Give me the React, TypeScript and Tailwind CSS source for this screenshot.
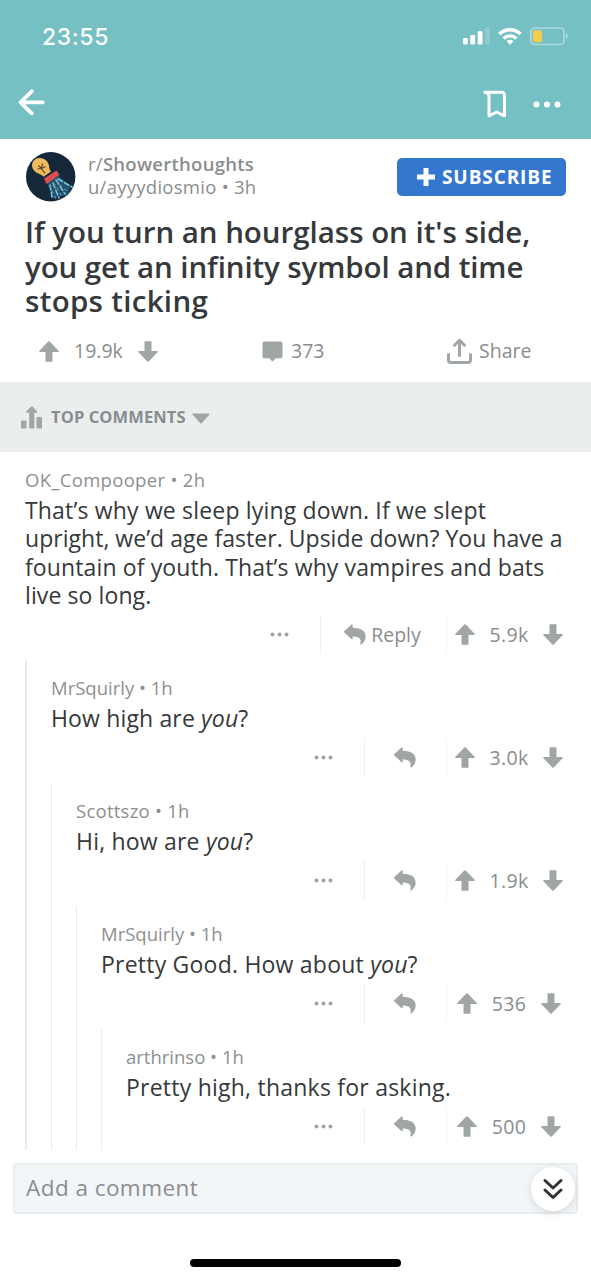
import React from 'react';

type IVotesProps = {
  count: string;
  className?: string;
};

type ICommentProps = {
  author: string;
  age: string;
  authorClass?: string;
  score: string;
  children: React.ReactNode;
  reply?: React.ReactNode;
};

const UpArrow = () => (
  <svg width="20" height="21" viewBox="0 0 20 21" fill="#a0a5a5">
    <path d="M9.3.5a1 1 0 0 1 1.4 0l8.9 9.3c.5.6.3 1.1-.5 1.1h-5.6v9.3c0 .4-.2.6-.6.6H7.1c-.4 0-.6-.2-.6-.6v-9.3H.9c-.8 0-1-.5-.5-1.1z" />
  </svg>
);

const DownArrow = () => (
  <svg width="20" height="21" viewBox="0 0 20 21" fill="#a0a5a5">
    <path d="M9.3 20.5a1 1 0 0 0 1.4 0l8.9-9.3c.5-.6.3-1.1-.5-1.1h-5.6V.8c0-.4-.2-.6-.6-.6H7.1c-.4 0-.6.2-.6.6v9.3H.9c-.8 0-1 .5-.5 1.1z" />
  </svg>
);

const ReplyArrow = () => (
  <svg width="22" height="21" viewBox="0 0 22 21" fill="#a0a5a5">
    <path d="M.4 7 7.3.7C8 .1 8.7.3 8.7 1.2v2.500c7 .1 13 2.600 13 8.800 0 3.600-2 6.300-4.500 7.900-.7.400-1.300.1-1-.7 1.600-4.300-.6-7.200-7.500-7.300v2.200c0 .9-.7 1.100-1.400.5L.4 8.600a1.100 1.100 0 0 1 0-1.600z" />
  </svg>
);

const Dots = () => (
  <svg width="19" height="5" viewBox="0 0 19 5" fill="#a0a5a5">
    <circle cx="2.500" cy="2.500" r="2" />
    <circle cx="9.500" cy="2.500" r="2" />
    <circle cx="16.500" cy="2.500" r="2" />
  </svg>
);

const Avatar = () => (
  <svg width="50" height="50" viewBox="0 0 50 50" className="shrink-0">
    <circle cx="24.700" cy="24.700" r="24.700" fill="#15283a" />
    <path d="M21 31 32 23.500 45 34l-3 9-15 3z" fill="#24506d" />
    <path
      d="M24 33l2 12M27 31l6 15M30 28l9 14M32 27l14 8"
      stroke="#7ac3d0"
      strokeWidth="1.600"
      strokeDasharray="5 2.500"
      strokeLinecap="round"
    />
    <path
      d="M24 35l6 12M29 32l7 13M31 30l11 10"
      stroke="#4a8bad"
      strokeWidth="1.500"
      strokeDasharray="3 3"
      strokeDashoffset="2"
    />
    <path
      d="M8 18.500C4 13.500 6.500 7 12.500 6c6-.7 10 3.500 10.500 8 .2 2.500.8 4 2 5.500l-7.500 5.300c-2-2.800-7-3.200-9.500-6.300z"
      fill="#efbb5d"
    />
    <path d="M12.500 13.500l3 3 1-5M15.500 16.500l3.500 5M11.500 17l4-.5 4-2" stroke="#5b4330" fill="none" strokeWidth="1.200" />
    <path d="M18 26.500 30.500 18.500l3 4.300L20.500 32z" fill="#d94f50" />
  </svg>
);

const SignalIcon = () => (
  <svg width="28" height="18" viewBox="0 0 28 18" fill="#fff">
    <rect x="0" y="11" width="4.800" height="6.500" rx="1.200" />
    <rect x="7.300" y="8" width="4.800" height="9.500" rx="1.200" />
    <rect x="14.700" y="4" width="4.800" height="13.500" rx="1.200" />
    <rect x="22" y=".5" width="4.800" height="17" rx="1.200" opacity=".2" />
  </svg>
);

const WifiIcon = () => (
  <svg width="24" height="18" viewBox="0 0 24 18" fill="none" stroke="#fff" strokeWidth="3.600">
    <path d="M1.500 7a15 15 0 0 1 21 0" />
    <path d="M5.600 11.500a9.200 9.200 0 0 1 12.800 0" strokeWidth="3.300" />
    <path d="M8.500 14.300a5 5 0 0 1 7 0L12 17.800z" fill="#fff" stroke="none" />
  </svg>
);

const BatteryIcon = () => (
  <svg width="39" height="19" viewBox="0 0 39 19" fill="none">
    <rect x="1" y="1" width="33" height="16.500" rx="4" stroke="#fff" strokeOpacity=".4" strokeWidth="1.700" />
    <rect x="3" y="3.300" width="9" height="12" rx="2" fill="#f2cc4b" />
    <path d="M36 6.300c2.300.8 2.300 5.200 0 6z" fill="#fff" opacity=".5" />
  </svg>
);

const Votes = ({ count, className = '' }: IVotesProps) => (
  <div className={`flex items-center gap-[15px] font-medium text-[#8a8d8e] ${className}`}>
    <UpArrow />
    <span>{count}</span>
    <DownArrow />
  </div>
);

const Comment = ({ author, age, authorClass = '', score, children, reply }: ICommentProps) => (
  <div className="pt-4 pb-[5.7px]">
    <p className={`text-[18.5px] leading-[23px] text-[#8d9091] ${authorClass}`}>
      {author} • {age}
    </p>
    <div className="mt-[5px] text-[23px] leading-[28.3px] whitespace-nowrap text-[#36393b]">
      {children}
    </div>
    <div className="mt-[6px] flex h-[39px] justify-end">
      <div className="flex w-[82px] items-center justify-center">
        <Dots />
      </div>
      <div
        className={`flex items-center justify-center border-l border-[#edf0f0] pr-[2px] ${
          reply ? 'w-[126px]' : 'w-[82px]'
        }`}
      >
        <ReplyArrow />
        {reply}
      </div>
      <Votes
        count={score}
        className="w-[145px] justify-center border-l border-[#f3f5f5] pr-[20px] text-[19.5px] tracking-[0.3px]"
      />
    </div>
  </div>
);

const Thread = ({ children, className = 'border-l' }: { children: React.ReactNode; className?: string }) => (
  <div className={`border-[#e9ecec] pl-[24px] ${className}`}>{children}</div>
);

const App = () => (
  <div className="flex h-[1280px] w-[591px] flex-col overflow-hidden bg-white font-['Open_Sans',sans-serif]">
    <header className="h-[139px] shrink-0 bg-[#75c0c3] text-white">
      <div className="flex h-[72px] items-center justify-between pr-[22px] pl-[42px]">
        <span className="pt-[2px] font-['Inter',sans-serif] text-[23px] font-medium tracking-[0.6px]">23:55</span>
        <div className="flex items-center">
          <SignalIcon />
          <div className="ml-[7px]">
            <WifiIcon />
          </div>
          <div className="ml-[8px]">
            <BatteryIcon />
          </div>
        </div>
      </div>
      <div className="flex h-[60px] items-center justify-between pr-[30px] pl-[18px]">
        <svg width="28" height="27" viewBox="0 0 28 27" fill="none" stroke="#fff" strokeWidth="3.800" strokeLinecap="round" strokeLinejoin="round">
          <path d="M13.700 2.300 2.500 13.300l11.200 11M2.500 13.300h22.300" />
        </svg>
        <div className="flex items-center gap-[26px] pt-[4px]">
          <svg width="25" height="28" viewBox="0 0 25 28" fill="none" stroke="#fff" strokeWidth="3" strokeLinejoin="round">
            <path d="M1.500 2.200h18c2 0 3 1.200 3 3V25.800L14.700 22 7 25.800V6c0-2.300-1.500-3.400-5-3.800" />
          </svg>
          <svg width="28" height="7" viewBox="0 0 28 7" fill="#fff">
            <circle cx="3.500" cy="3.500" r="3" />
            <circle cx="14" cy="3.500" r="3" />
            <circle cx="24.500" cy="3.500" r="3" />
          </svg>
        </div>
      </div>
    </header>

    {/* Post */}
    <article className="h-[243px] shrink-0 pt-[13px]">
      <div className="flex h-[50px] pr-[25px] pl-[26px]">
        <Avatar />
        <div className="ml-[12px] flex-1 text-[18.5px] leading-[23px] tracking-[0.27px] whitespace-nowrap text-[#8a8d8e]">
          <p>
            r/<span className="font-semibold">Showerthoughts</span>
          </p>
          <p>u/ayyydiosmio • 3h</p>
        </div>
        <button className="mt-[6px] flex h-[38px] w-[169px] items-center gap-[7px] rounded-[5px] bg-[#3477cf] pl-[20px] text-[19px] font-bold tracking-[0.9px] text-white">
          <svg width="18" height="18" viewBox="0 0 18 18" stroke="#fff" strokeWidth="5">
            <path d="M9 0v18M0 9h18" />
          </svg>
          SUBSCRIBE
        </button>
      </div>
      <h1 className="mt-[13px] pl-[25px] text-[29.5px] leading-[34.5px] font-semibold whitespace-nowrap text-[#36393b]">
        <span className="block tracking-[-0.03px]">If you turn an hourglass on it's side,</span>
        <span className="block tracking-[-0.1px]">you get an infinity symbol and time</span>
        <span className="block tracking-[0.3px]">stops ticking</span>
      </h1>
      <div className="flex h-[65px] items-center pl-[39px] text-[19.5px] font-medium text-[#8a8d8e]">
        <Votes count="19.9k" className="w-[223px] shrink-0" />
        <svg width="21" height="21" viewBox="0 0 21 21" fill="#a0a5a5" className="shrink-0">
          <path d="M2.500.5h16A1.800 1.800 0 0 1 20.500 2.500v13a1.800 1.800 0 0 1-2 1.800H13.500l-2.500 2.900h-1l-2.500-2.900h-5a1.800 1.800 0 0 1-2-1.800v-13a1.800 1.800 0 0 1 2-2z" />
        </svg>
        <span className="ml-[8px] w-[155px]">373</span>
        <svg width="27" height="27" viewBox="0 0 27 27" fill="none" stroke="#a0a5a5" strokeWidth="3" strokeLinecap="round" strokeLinejoin="round">
          <path d="M2.500 16.500v5.500c0 1.700.8 2.500 2.500 2.500h17c1.700 0 2.500-.8 2.500-2.500v-5.500M13.500 17.500V3M8.500 7.300l5-5 5 5" />
        </svg>
        <span className="ml-[6px]">Share</span>
      </div>
    </article>

    <div className="flex h-[70px] shrink-0 items-center bg-[#eaeeef] pl-[21px]">
      <svg width="22" height="23" viewBox="0 0 22 23" fill="#a0a5a5">
        <rect x="0" y="14.500" width="5.500" height="8" rx=".8" />
        <path d="M10 .5h1.400l5 5.300c.4.500.2.900-.4.900h-2.700v15c0 .5-.3.800-.8.800H9c-.5 0-.8-.3-.8-.8v-15H5.500c-.6 0-.8-.4-.4-.9z" />
        <rect x="15.500" y="11" width="5.500" height="11.500" rx=".8" />
      </svg>
      <span className="ml-[8px] pt-[1px] text-[16.5px] font-bold tracking-[0.1px] text-[#8a8d8e]">
        TOP COMMENTS
      </span>
      <svg width="18" height="11" viewBox="0 0 18 11" fill="#a0a5a5" className="mt-[2px] ml-[6px]">
        <path d="M.9.500h16c.8 0 1 .5.500 1.100l-7.600 8.500a1.100 1.100 0 0 1-1.700 0L.4 1.600C-.1 1 .1.500.9.500z" />
      </svg>
    </div>

    {/* Comments */}
    <main className="h-[698px] shrink-0 overflow-hidden pl-[25px]">
      <Comment
        author="OK_Compooper"
        age="2h"
        authorClass="tracking-[0.31px]"
        score="5.9k"
        reply={<span className="ml-[5px] text-[19.5px] font-medium text-[#8a8d8e]">Reply</span>}
      >
        <p className="tracking-[0.17px]">That’s why we sleep lying down. If we slept</p>
        <p className="tracking-[0.03px]">upright, we’d age faster. Upside down? You have a</p>
        <p className="tracking-[0.12px]">fountain of youth. That’s why vampires and bats</p>
        <p className="tracking-[0.1px]">live so long.</p>
      </Comment>
      <Thread className="border-l-2">
        <Comment author="MrSquirly" age="1h" score="3.0k">
          <p className="tracking-[0.15px]">
            How high are <em>you</em>?
          </p>
        </Comment>
        <Thread>
          <Comment author="Scottszo" age="1h" authorClass="tracking-[0.25px]" score="1.9k">
            <p className="tracking-[0.2px]">
              Hi, how are <em>you</em>?
            </p>
          </Comment>
          <Thread>
            <Comment author="MrSquirly" age="1h" score="536">
              <p className="tracking-[0.22px]">
                Pretty Good. How about <em>you</em>?
              </p>
            </Comment>
            <Thread>
              <Comment author="arthrinso" age="1h" score="500">
                <p className="tracking-[0.23px]">Pretty high, thanks for asking.</p>
              </Comment>
            </Thread>
          </Thread>
        </Thread>
      </Thread>
    </main>

    {/* Comment box */}
    <footer className="flex-1 bg-white pt-[13px]">
      <div className="mx-[13px] flex h-[51px] items-center justify-between rounded-[4px] border-2 border-[#e9edee] bg-[#f2f6f8] pr-[1px] pl-[11px]">
        <span className="pb-[1px] text-[22.5px] tracking-[0.45px] text-[#8a8d8e]">Add a comment</span>
        <button className="flex size-[44px] items-center justify-center rounded-full bg-white shadow-[0_2px_8px_rgba(0,0,0,0.12)]">
          <svg width="20" height="22" viewBox="0 0 20 22" fill="none" stroke="#303335" strokeWidth="3" strokeLinecap="round" strokeLinejoin="round">
            <path d="M2 2.500l8 7.500 8-7.500M2 12l8 7.500 8-7.500" />
          </svg>
        </button>
      </div>
      <div className="mx-auto mt-[45px] h-[8px] w-[211px] rounded-full bg-black" />
    </footer>
  </div>
);

export default App;
